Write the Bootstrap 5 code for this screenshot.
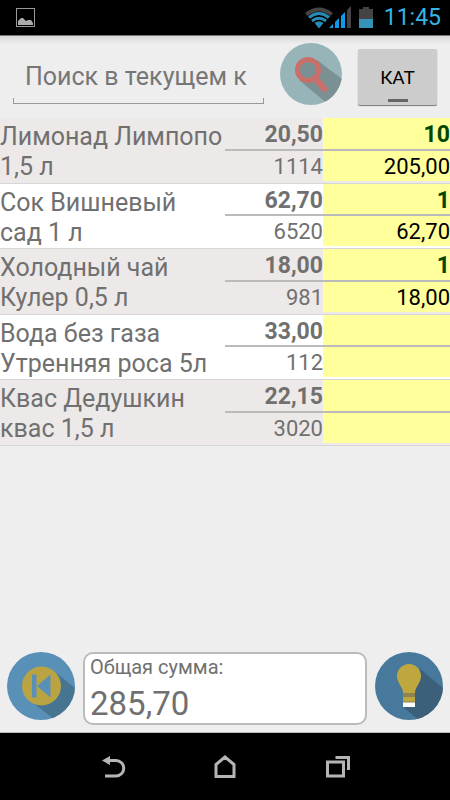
<!DOCTYPE html>
<html lang="ru">
<head>
<meta charset="utf-8">
<meta name="viewport" content="width=device-width, initial-scale=1">
<title>Заказ</title>
<link href="https://cdn.jsdelivr.net/npm/bootstrap@5.3.0/dist/css/bootstrap.min.css" rel="stylesheet">
<style>
body { font-family: Roboto, "Noto Sans", sans-serif; background: #eee; color: #707070; }
svg { display: block; }
.status-bar { height: 36px; padding: 0 9px 0 16px; color: #33b5e5; font-size: 23px; line-height: 36px; border-bottom: 1px solid #777; }
.status-icons { gap: 11px; }
.search-bar { height: 82px; padding: 0 13px; background: linear-gradient(#d8d8d8, #eee 8px); }
.search-input {
  min-width: 0; height: 48px; margin-top: 20px; padding: 0 12px 6px; border: 0; border-bottom: 1px solid #999; border-radius: 0; outline: 0;
  color: #707070; font-size: 25px;
  background: linear-gradient(#999, #999) left bottom / 1px 5px no-repeat, linear-gradient(#999, #999) right bottom / 1px 5px no-repeat;
}
.search-input::placeholder { color: #767676; opacity: 1; }
.round-btn { padding: 0; border: 0; border-radius: 50%; background: none; }
.find-btn { margin: 7px 16px 0 16px; }
.cat-btn {
  width: 79px; height: 56px; margin-top: 13px; padding: 0; border: 0; border-radius: 2px; background: #ccc; color: #000; font-size: 19px;
  box-shadow: 0 1px 1px #777;
}
.cat-btn::after { content: ""; display: block; width: 20px; height: 3px; background: #666; margin: 9px auto 0; }
.cat-text { display: block; line-height: 24px; margin-top: 14px; }
.goods { table-layout: fixed; border-collapse: separate; border-spacing: 0; }
.goods td, .goods th { padding: 0; }
.col-price { width: 98px; }
.col-sum { width: 127px; }
.goods tbody { background: #ede9e8; box-shadow: inset 0 -1px #d8d6d6; }
.goods tbody:nth-of-type(even) { background: #fff; }
.title-cell { font-size: 25px; line-height: 30px; vertical-align: top; font-weight: 400; }
.title-cell span { display: block; padding-top: 4px; }
.goods .upper td { height: 33px; padding-top: 3px; border-bottom: 2px solid #bbb; font-size: 23px; line-height: 28px; font-weight: 700; }
.goods .lower td { height: 33px; padding-top: 2px; border-bottom: 3px solid transparent; background-clip: padding-box; font-size: 22px; line-height: 28px; }
.goods tbody:nth-of-type(even) .upper td { height: 32px; line-height: 27px; }
.yellow { background-color: #ffff9c; color: #000; }
.upper .yellow { color: #004800; }
.footer-bar { padding: 0 7px 7px; gap: 8px; border-bottom: 1px solid #bbb; }
.total-box { height: 73px; padding: 0 5px; border: 2px solid #bbb; border-radius: 10px; background: #fff; }
.total-label { font-size: 20px; line-height: 27px; }
.total-value { font-size: 33px; line-height: 46px; }
.nav-keys { height: 67px; padding: 0 57px; }
.nav-keys button { flex: 1; height: 67px; padding: 0; border: 0; background: none; }
.nav-keys svg { margin: 0 auto; }
</style>
<script src="https://cdn.jsdelivr.net/npm/bootstrap@5.3.0/dist/js/bootstrap.bundle.min.js"></script>
</head>
<body>
<div class="d-flex flex-column min-vh-100">
  <header class="status-bar bg-black d-flex align-items-center justify-content-between">
    <svg width="19" height="20" viewBox="0 0 19 20" aria-hidden="true"><rect x=".5" y=".5" width="18" height="18" fill="none" stroke="#999"/><path d="M2 17v-4l3-3 2 0 3 3 2-1 3 0 2 3v2z" fill="#aaa"/></svg>
    <div class="d-flex align-items-center status-icons">
      <svg width="68" height="24" viewBox="0 0 68 24" aria-hidden="true">
        <path d="M0 7Q14-4 28 7L25.500 10Q14 1 2.500 10z" fill="#444"/>
        <g fill="none" stroke="#268cb5" stroke-width="3"><path d="M4 11.500Q14 3.500 24 11.500"/><path d="M7 15Q14 9.500 21 15"/></g>
        <path d="M9.500 17Q14 13.500 18.500 17L14 22.500z" fill="#268cb5"/>
        <path d="M24 22l4-4v4zM30 22v-6l4-4v10zM36 22V10l4-4v16z" fill="#0c9bea"/>
        <path d="M42 22V4l4-4v22z" fill="#444"/>
        <path d="M54 13V3h4V1h6v2h4v10z" fill="#444"/><path d="M54 13h14v9H54z" fill="#3592b8"/>
      </svg>
      <span class="clock">11:45</span>
    </div>
  </header>

  <form class="search-bar d-flex align-items-start">
    <input class="search-input flex-fill" type="text" placeholder="Поиск в текущем к" aria-label="Поиск в текущем каталоге">
    <button class="round-btn find-btn flex-shrink-0" type="button" aria-label="Найти">
      <svg width="62" height="62" viewBox="0 0 62 62">
        <defs><clipPath id="c1"><circle cx="31" cy="31" r="31"/></clipPath></defs>
        <circle cx="31" cy="31" r="31" fill="#97b5b9"/>
        <path d="M37 17L62 36V62H49L19 37z" fill="#7b9093" clip-path="url(#c1)"/>
        <circle cx="28" cy="27" r="10.500" fill="#7b9093" stroke="#c96f6a" stroke-width="5"/>
        <path d="M35 35L44.500 46" stroke="#c96f6a" stroke-width="6" stroke-linecap="round"/>
      </svg>
    </button>
    <button class="cat-btn flex-shrink-0" type="button" aria-pressed="false"><span class="cat-text">КАТ</span></button>
  </form>

  <main class="flex-fill">
    <table class="goods w-100">
      <colgroup><col><col class="col-price"><col class="col-sum"></colgroup>
      <tbody>
        <tr class="upper"><th class="title-cell" rowspan="2" scope="rowgroup"><span>Лимонад Лимпопо<br>1,5 л</span></th><td class="text-end">20,50</td><td class="text-end yellow">10</td></tr>
        <tr class="lower"><td class="text-end">1114</td><td class="text-end yellow">205,00</td></tr>
      </tbody>
      <tbody>
        <tr class="upper"><th class="title-cell" rowspan="2" scope="rowgroup"><span>Сок Вишневый<br>сад 1 л</span></th><td class="text-end">62,70</td><td class="text-end yellow">1</td></tr>
        <tr class="lower"><td class="text-end">6520</td><td class="text-end yellow">62,70</td></tr>
      </tbody>
      <tbody>
        <tr class="upper"><th class="title-cell" rowspan="2" scope="rowgroup"><span>Холодный чай<br>Кулер 0,5 л</span></th><td class="text-end">18,00</td><td class="text-end yellow">1</td></tr>
        <tr class="lower"><td class="text-end">981</td><td class="text-end yellow">18,00</td></tr>
      </tbody>
      <tbody>
        <tr class="upper"><th class="title-cell" rowspan="2" scope="rowgroup"><span>Вода без газа<br>Утренняя роса 5л</span></th><td class="text-end">33,00</td><td class="yellow"></td></tr>
        <tr class="lower"><td class="text-end">112</td><td class="yellow"></td></tr>
      </tbody>
      <tbody>
        <tr class="upper"><th class="title-cell" rowspan="2" scope="rowgroup"><span>Квас Дедушкин<br>квас 1,5 л</span></th><td class="text-end">22,15</td><td class="yellow"></td></tr>
        <tr class="lower"><td class="text-end">3020</td><td class="yellow"></td></tr>
      </tbody>
    </table>
  </main>

  <section class="footer-bar d-flex align-items-start">
    <button class="round-btn" type="button" aria-label="В начало">
      <svg width="68" height="68" viewBox="0 0 68 68">
        <defs><clipPath id="c2"><circle cx="34" cy="34" r="34"/></clipPath></defs>
        <circle cx="34" cy="34" r="34" fill="#5990b8"/>
        <path d="M48 20L68 36V68H48L20 46z" fill="#477490" clip-path="url(#c2)"/>
        <circle cx="34.500" cy="34" r="19.500" fill="#b9a342"/>
        <path d="M25 22.500h4.500v23H25zM43.500 22.500v23L30 34z" fill="#5990b8"/>
      </svg>
    </button>
    <div class="total-box flex-fill">
      <div class="total-label">Общая сумма:</div>
      <div class="total-value">285,70</div>
    </div>
    <button class="round-btn" type="button" aria-label="Подсказка">
      <svg width="68" height="68" viewBox="0 0 68 68">
        <defs><clipPath id="c3"><circle cx="34" cy="34" r="34"/></clipPath></defs>
        <circle cx="34" cy="34" r="34" fill="#47799c"/>
        <path d="M44 16L68 36V68H44L28 55z" fill="#3c607a" clip-path="url(#c3)"/>
        <path d="M28 50V41C28 35 22 31 22 24a12 12 0 0 1 24 0C46 31 40 35 40 41v9z" fill="#bfa740"/>
        <path d="M28 41h12v4H28z" fill="#8f8355"/><path d="M28 50h12v5H28z" fill="#fff"/><path d="M28 49.500h12v1H28z" fill="#8f8355"/>
      </svg>
    </button>
  </section>

  <nav class="nav-keys bg-black d-flex" aria-label="Системные кнопки">
    <button type="button" aria-label="Назад"><svg width="26" height="24" viewBox="0 0 26 24"><path d="M8 5.500h8a7.700 7.700 0 0 1 0 15.500H5" fill="none" stroke="#b5b5b5" stroke-width="3"/><path d="M2 5.500L10 1v9z" fill="#b5b5b5"/></svg></button>
    <button type="button" aria-label="Домой"><svg width="24" height="26" viewBox="0 0 24 26"><path d="M3 22.500V10.500L12 3l9 7.500v12z" fill="none" stroke="#b5b5b5" stroke-width="3"/></svg></button>
    <button type="button" aria-label="Недавние"><svg width="26" height="24" viewBox="0 0 26 24"><path d="M3.500 7h16v14h-16zM11.500 2.500h13V15" fill="none" stroke="#b5b5b5" stroke-width="3"/></svg></button>
  </nav>
</div>
</body>
</html>
